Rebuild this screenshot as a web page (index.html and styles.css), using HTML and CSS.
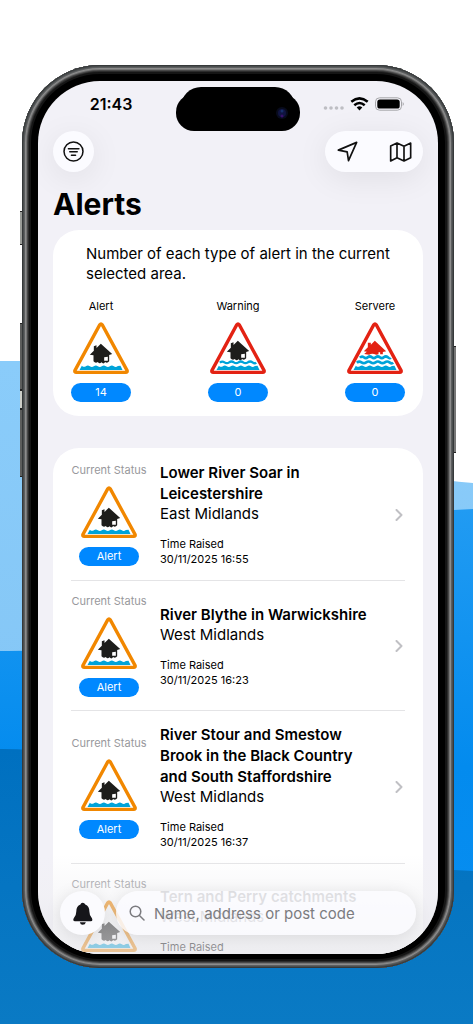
FILE: index.html
```html
<!DOCTYPE html>
<html lang="en">
<head>
<meta charset="utf-8">
<meta name="viewport" content="width=device-width, initial-scale=1">
<title>Alerts</title>
<link rel="stylesheet" href="styles.css">
</head>
<body>
<svg class="backdrop" viewBox="0 0 473 1024" preserveAspectRatio="none" aria-hidden="true">
  <defs>
    <linearGradient id="sky" x1="0" y1="0" x2="0" y2="1"><stop offset="0" stop-color="#8accfa"/><stop offset="1" stop-color="#80c2f2"/></linearGradient>
    <linearGradient id="mid" x1="0" y1="0" x2="0" y2="1"><stop offset="0" stop-color="#219bf2"/><stop offset=".5" stop-color="#038bee"/><stop offset="1" stop-color="#0a8ff2"/></linearGradient>
    <linearGradient id="deep" x1="0" y1="0" x2="0" y2="1"><stop offset="0" stop-color="#0070c0"/><stop offset="1" stop-color="#0a7ac4"/></linearGradient>
  </defs>
  <path fill="url(#sky)" d="M0 361H60C200 370 330 475 473 483V1024H0Z"/>
  <path fill="url(#mid)" d="M0 651C200 655 300 512 454 510L473 509V1024H0Z"/>
  <path fill="url(#deep)" d="M0 749C180 748 280 862 454 870L473 871V1024H0Z"/>
</svg>

<svg class="symbols" aria-hidden="true">
  <symbol id="house" viewBox="0 0 190 190" overflow="visible">
    <path d="M94 83L128 114L119 117V136Q113 143 107 138Q102 146 96 139Q90 145 85 138Q78 143 72 136V118L61 116L73 104V91L81 88V96Z"/>
    <path fill="#fff" d="M104 124L115 122V134H104Z"/>
  </symbol>
  <symbol id="wave" viewBox="0 0 190 190" overflow="visible">
    <path d="M37 149Q43 155 49 151Q55 146 61 151Q67 155 73 151Q79 146 85 151Q91 155 97 151Q103 146 109 151Q115 155 121 151Q127 146 133 151Q139 155 145 150L153 149L159 162H30Z"/>
  </symbol>
  <symbol id="sign-alert" viewBox="11 18 167 156">
    <path fill="#fff" stroke="#f18700" stroke-width="10" stroke-linejoin="round" d="M91 26Q94.500 21 98 26L173 164Q174 169 169 169H20Q15 169 16 164Z"/>
    <use href="#house" width="190" height="190" fill="#1d1d1b"/>
    <use href="#wave" width="190" height="190" fill="#00a3d9"/>
  </symbol>
  <symbol id="sign-warning" viewBox="11 18 167 156">
    <path fill="#fff" stroke="#e32213" stroke-width="10" stroke-linejoin="round" d="M91 26Q94.500 21 98 26L173 164Q174 169 169 169H20Q15 169 16 164Z"/>
    <use href="#house" y="-9" width="190" height="190" fill="#1d1d1b"/>
    <use href="#wave" width="190" height="190" fill="#00a3d9"/>
    <path fill="none" stroke="#00a3d9" stroke-width="7" d="M40 140Q47 134 54 139T68 139T82 139T96 139T110 139T124 139T138 139T149 140"/>
  </symbol>
  <symbol id="sign-severe" viewBox="11 18 167 156">
    <path fill="#fff" stroke="#e32213" stroke-width="10" stroke-linejoin="round" d="M91 26Q94.500 21 98 26L173 164Q174 169 169 169H20Q15 169 16 164Z"/>
    <path fill="#e32213" d="M94 74L128 106L118 108V115H110V109H105V115Q98 118 92 114Q84 111 77 116L62 114L70 107L61 106L73 94V80H82V86Z"/>
    <use href="#wave" width="190" height="190" fill="#00a3d9"/>
    <path fill="none" stroke="#00a3d9" stroke-width="8" d="M40 140Q47 134 54 139T68 139T82 139T96 139T110 139T124 139T138 139T149 140M49 125Q55 119 61 124T73 124T85 124T97 124T109 124T121 124T133 124T141 125"/>
  </symbol>
</svg>

<main class="phone">
  <span class="side action"></span><span class="side vol-up"></span><span class="side vol-gap"></span><span class="side vol-down"></span><span class="side power"></span>
  <div class="bezel">
  <div class="screen">
    <div class="status-bar">
      <time class="clock">21:43</time>
      <svg class="island" viewBox="0 0 124 44" aria-hidden="true">
        <rect x="5" y="0" width="114" height="43" rx="20"/><rect x="0" y="7" width="124" height="37" rx="18"/>
        <circle cx="106" cy="26" r="6" fill="#080b1c"/><circle cx="106" cy="26" r="4" fill="#101440"/><circle cx="106" cy="24" r="1.500" fill="#17306b"/><circle cx="106" cy="29" r="1.500" fill="#38116b"/>
      </svg>
      <svg class="indicators" viewBox="0 0 82 15" role="img" aria-label="Wi-Fi, battery full">
        <g fill="#bebec3"><circle cx="2.500" cy="11" r="1.800"/><circle cx="8" cy="11" r="1.800"/><circle cx="13.500" cy="11" r="1.800"/><circle cx="19" cy="11" r="1.800"/></g>
        <g fill="none" stroke="#000" stroke-width="2.500"><path d="M28.300 4.800Q36.500-2 44.700 4.800"/><path d="M31.300 8.200Q36.500 3.700 41.700 8.200"/></g>
        <path d="M33.700 10.500Q36.500 8 39.300 10.500L36.500 13.500Z"/>
        <rect x="52.500" y=".8" width="26" height="12.400" rx="4" fill="none" stroke="#a5a5a9"/>
        <rect x="54.300" y="2.500" width="22.400" height="9" rx="2.600"/>
        <path fill="#a5a5a9" d="M79.700 5Q82 7 79.700 9Z"/>
      </svg>
    </div>

    <div class="toolbar">
      <button class="round glass" aria-label="Filter">
        <svg width="21" height="21" viewBox="188 274 62 62"><g fill="none" stroke="#111" stroke-width="4.500" stroke-linecap="round"><circle cx="219" cy="305" r="28"/><path d="M204 297H235M208 306H230M213 316H225"/></g></svg>
      </button>
      <div class="group glass">
        <button class="tool" aria-label="My location">
          <svg width="21" height="21" viewBox="310 274 62 62"><path fill="none" stroke="#111" stroke-width="5" stroke-linejoin="round" d="M314 301L368 278L344 332L340 306Z"/></svg>
        </button>
        <button class="tool" aria-label="Map">
          <svg width="23" height="22" viewBox="466 272 69 66"><path fill="none" stroke="#111" stroke-width="5" stroke-linejoin="round" d="M471 287L490 278L511 288L531 278V322L511 332L490 322L471 332ZM490 278V322M511 288V332"/></svg>
        </button>
      </div>
    </div>

    <h1>Alerts</h1>

    <section class="card summary">
      <p>Number of each type of alert in the current selected area.</p>
      <div class="counts">
        <div class="sign-stack"><span class="caption">Alert</span><svg class="sign"><use href="#sign-alert"/></svg><span class="pill">14</span></div>
        <div class="sign-stack"><span class="caption">Warning</span><svg class="sign"><use href="#sign-warning"/></svg><span class="pill">0</span></div>
        <div class="sign-stack"><span class="caption">Servere</span><svg class="sign"><use href="#sign-severe"/></svg><span class="pill">0</span></div>
      </div>
    </section>

    <section class="card list">
      <a class="row" href="#soar">
        <div class="sign-stack state"><span class="caption">Current Status</span><svg class="sign"><use href="#sign-alert"/></svg><span class="pill">Alert</span></div>
        <div class="details"><h2>Lower River Soar in Leicestershire</h2><p class="region">East Midlands</p><p class="raised">Time Raised<br>30/11/2025 16:55</p></div>
        <svg class="chevron" viewBox="0 0 8 12"><path d="M1.500 1L6.500 6L1.500 11"/></svg>
      </a>
      <a class="row" href="#blythe">
        <div class="sign-stack state"><span class="caption">Current Status</span><svg class="sign"><use href="#sign-alert"/></svg><span class="pill">Alert</span></div>
        <div class="details"><h2>River Blythe in Warwickshire</h2><p class="region">West Midlands</p><p class="raised">Time Raised<br>30/11/2025 16:23</p></div>
        <svg class="chevron" viewBox="0 0 8 12"><path d="M1.500 1L6.500 6L1.500 11"/></svg>
      </a>
      <a class="row" href="#stour">
        <div class="sign-stack state"><span class="caption">Current Status</span><svg class="sign"><use href="#sign-alert"/></svg><span class="pill">Alert</span></div>
        <div class="details"><h2>River Stour and Smestow Brook in the Black Country and South Staffordshire</h2><p class="region">West Midlands</p><p class="raised">Time Raised<br>30/11/2025 16:37</p></div>
        <svg class="chevron" viewBox="0 0 8 12"><path d="M1.500 1L6.500 6L1.500 11"/></svg>
      </a>
      <a class="row" href="#tern">
        <div class="sign-stack state"><span class="caption">Current Status</span><svg class="sign"><use href="#sign-alert"/></svg></div>
        <div class="details"><h2>Tern and Perry catchments</h2><p class="region">West Midlands</p><p class="raised">Time Raised</p></div>
      </a>
    </section>

    <div class="dock">
      <button class="bell" aria-label="Notifications">
        <svg width="20" height="23" viewBox="187 182 62 72"><path fill="#16161a" d="M217 184Q223 184 225 190Q238 195 238 212Q238 225 246 233Q250 242 242 242H192Q185 242 189 233Q197 225 197 212Q197 195 210 190Q211 184 217 184ZM208 245H227Q225 253 217 253Q210 253 208 245Z"/></svg>
      </button>
      <label class="search">
        <svg width="16" height="16" viewBox="0 0 16 16"><g fill="none" stroke="#7c7c80" stroke-width="1.500" stroke-linecap="round"><circle cx="6.500" cy="6.500" r="5.300"/><path d="M10.500 10.500L15 15"/></g></svg>
        <input type="search" placeholder="Name, address or post code" aria-label="Name, address or post code">
      </label>
    </div>
  </div>
  </div>
</main>
</body>
</html>
```
FILE: styles.css
```css
* { box-sizing: border-box; }

body {
  margin: 0;
  height: 100vh;
  padding: 65px 19px 56px 22px;
  display: flex;
  overflow: hidden;
  background: #fff;
  color: #000;
  font-family: Inter, "Liberation Sans", sans-serif;
}

h1, h2, p { margin: 0; }
svg { display: block; flex: none; }
button { border: 0; padding: 0; background: none; display: flex; align-items: center; justify-content: center; }

.backdrop { position: absolute; inset: 0; width: 100%; height: 100%; z-index: -2; }
.symbols { position: absolute; width: 0; height: 0; }

.phone { position: relative; flex: 1; min-width: 0; display: flex; }

.bezel {
  flex: 1;
  min-width: 0;
  display: flex;
  padding: 16px 16px 14px;
  border-radius: 78px;
  background: #000;
  box-shadow:
    inset 0 0 0 1px #36393a,
    inset 0 0 0 2px #4b4e4f,
    inset 0 0 0 3px #5d5f60,
    inset 0 0 0 4px #8c8c8c,
    inset 0 0 0 5px #757575,
    inset 0 0 0 6px #484848,
    inset 0 0 0 7px #2c2c2c,
    inset 0 0 0 9px #151515;
}

.side { position: absolute; left: -2px; width: 3px; z-index: -1; background: #5c5d5c; border: solid #222; border-width: 1px 0; }
.action { top: 146px; height: 34px; background: #9a9c98; }
.vol-up { top: 258px; height: 67px; }
.vol-gap { top: 325px; height: 19px; background: #cdcec8; }
.vol-down { top: 344px; height: 68px; }
.power { left: auto; right: -2px; top: 281px; height: 107px; background: #777; }

.screen {
  position: relative;
  flex: 1;
  min-width: 0;
  overflow: hidden;
  border-radius: 62px;
  background: #f2f1f7;
  padding: 0 15px;
}

.status-bar { display: grid; grid-template-columns: 1fr auto 1fr; align-items: center; height: 50px; margin: 0 -15px; }
.clock { justify-self: center; padding: 0 0 4px 8px; font-size: 16px; font-weight: 600; }
.island { width: 124px; height: 44px; margin-top: 6px; }
.indicators { width: 82px; height: 15px; justify-self: center; margin: 0 10px 3px 0; }

.toolbar { display: flex; justify-content: space-between; }
.glass { background: #fbfbff; border-radius: 21px; box-shadow: 0 6px 32px rgba(0, 0, 0, .08); height: 41px; }
.round { width: 41px; }
.group { display: flex; justify-content: space-between; width: 98px; }
.tool { width: 45px; }

h1 { margin: 12px 0 6px; font-size: 30px; line-height: 40px; font-weight: 700; }

.card { background: #fff; border-radius: 26px; }
.summary { padding: 14px 18px; margin-bottom: 32px; }
.summary p { padding: 0 15px; font-size: 15px; line-height: 20px; }
.counts { display: flex; justify-content: space-between; margin-top: 15px; }

.sign-stack { display: flex; flex-direction: column; align-items: center; gap: 9px; width: 60px; }
.caption { font-size: 11px; line-height: 14px; white-space: nowrap; }
.sign { width: 56px; height: 52px; }
.pill { width: 100%; height: 19px; border-radius: 10px; background: #0088ff; color: #fff; font-size: 11px; line-height: 19px; text-align: center; }

.list { padding: 1px 18px 0; }
.row { display: flex; align-items: center; padding: 13px 0; border-bottom: 1px solid #e4e4e6; color: inherit; text-decoration: none; }
.row:last-child { border: 0; height: 130px; align-items: flex-start; }
.state { width: 76px; }
.state .caption { color: #98989c; }
.state .pill { width: 60px; }
.details { flex: 1; min-width: 0; padding: 0 22px 0 13px; }
.row:last-child .details { padding-top: 9px; }
h2 { font-size: 15px; line-height: 21px; font-weight: 600; }
.region { font-size: 15px; line-height: 20px; }
.raised { margin-top: 13px; font-size: 11px; line-height: 15px; }
.chevron { width: 8px; height: 12px; margin-right: 2px; fill: none; stroke: #c0c0c4; stroke-width: 2; stroke-linecap: round; stroke-linejoin: round; }

.dock {
  position: absolute;
  inset: auto 0 0;
  display: flex;
  gap: 11px;
  padding: 36px 22px 19px;
  background: linear-gradient(rgba(242, 242, 245, 0), rgba(240, 240, 243, .45) 40%, rgba(228, 228, 233, .65));
}
.bell, .search { height: 44px; border-radius: 22px; background: rgba(251, 251, 255, .8); box-shadow: 0 2px 16px rgba(0, 0, 0, .1); }
.bell { width: 45px; background: #fbfbfe; }
.search { flex: 1; min-width: 0; display: flex; align-items: center; gap: 9px; padding: 0 13px; }
.search input { flex: 1; min-width: 0; border: 0; padding: 0; outline: 0; background: none; font: inherit; font-size: 15px; }
.search input::placeholder { color: #7c7c80; opacity: 1; }
```
